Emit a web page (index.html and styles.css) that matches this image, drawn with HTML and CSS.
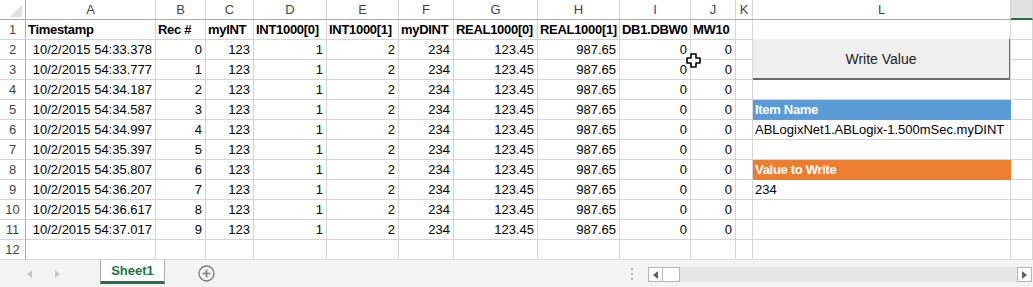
FILE: index.html
```html
<!DOCTYPE html>
<html lang="en">
<head>
    <meta charset="UTF-8">
    <title>Sheet1</title>
    <link rel="stylesheet" href="styles.css">
</head>
<body>
<div class="app">
    <div class="sheet">
        <!-- column headers -->
        <div class="corner"><svg width="26" height="19" viewBox="0 0 26 19"><polygon points="22,5 22,17 10,17" fill="#dfdfdf"/></svg></div>
        <div class="ch">A</div>
        <div class="ch">B</div>
        <div class="ch">C</div>
        <div class="ch">D</div>
        <div class="ch">E</div>
        <div class="ch">F</div>
        <div class="ch">G</div>
        <div class="ch">H</div>
        <div class="ch">I</div>
        <div class="ch">J</div>
        <div class="ch">K</div>
        <div class="ch">L</div>
        <div class="ch ch-sel"></div>

        <!-- row 1 -->
        <div class="rh">1</div>
        <div class="c bold">Timestamp</div>
        <div class="c bold">Rec #</div>
        <div class="c bold">myINT</div>
        <div class="c bold">INT1000[0]</div>
        <div class="c bold">INT1000[1]</div>
        <div class="c bold">myDINT</div>
        <div class="c bold">REAL1000[0]</div>
        <div class="c bold">REAL1000[1]</div>
        <div class="c bold">DB1.DBW0</div>
        <div class="c bold">MW10</div>
        <div class="c"></div>
        <div class="c"></div>
        <div class="c"></div>

        <!-- row 2 -->
        <div class="rh">2</div>
        <div class="c num">10/2/2015 54:33.378</div>
        <div class="c num">0</div>
        <div class="c num">123</div>
        <div class="c num">1</div>
        <div class="c num">2</div>
        <div class="c num">234</div>
        <div class="c num">123.45</div>
        <div class="c num">987.65</div>
        <div class="c num">0</div>
        <div class="c num">0</div>
        <div class="c"></div>
        <div class="c btn-cell"><button class="write-btn">Write Value</button></div>
        <div class="c"></div>

        <!-- row 3 -->
        <div class="rh">3</div>
        <div class="c num">10/2/2015 54:33.777</div>
        <div class="c num">1</div>
        <div class="c num">123</div>
        <div class="c num">1</div>
        <div class="c num">2</div>
        <div class="c num">234</div>
        <div class="c num">123.45</div>
        <div class="c num">987.65</div>
        <div class="c num">0</div>
        <div class="c num">0</div>
        <div class="c"></div>
        <div class="c"></div>

        <!-- row 4 -->
        <div class="rh">4</div>
        <div class="c num">10/2/2015 54:34.187</div>
        <div class="c num">2</div>
        <div class="c num">123</div>
        <div class="c num">1</div>
        <div class="c num">2</div>
        <div class="c num">234</div>
        <div class="c num">123.45</div>
        <div class="c num">987.65</div>
        <div class="c num">0</div>
        <div class="c num">0</div>
        <div class="c"></div>
        <div class="c"></div>
        <div class="c"></div>

        <!-- row 5 -->
        <div class="rh">5</div>
        <div class="c num">10/2/2015 54:34.587</div>
        <div class="c num">3</div>
        <div class="c num">123</div>
        <div class="c num">1</div>
        <div class="c num">2</div>
        <div class="c num">234</div>
        <div class="c num">123.45</div>
        <div class="c num">987.65</div>
        <div class="c num">0</div>
        <div class="c num">0</div>
        <div class="c"></div>
        <div class="c bold fill-blue">Item Name</div>
        <div class="c"></div>

        <!-- row 6 -->
        <div class="rh">6</div>
        <div class="c num">10/2/2015 54:34.997</div>
        <div class="c num">4</div>
        <div class="c num">123</div>
        <div class="c num">1</div>
        <div class="c num">2</div>
        <div class="c num">234</div>
        <div class="c num">123.45</div>
        <div class="c num">987.65</div>
        <div class="c num">0</div>
        <div class="c num">0</div>
        <div class="c"></div>
        <div class="c">ABLogixNet1.ABLogix-1.500mSec.myDINT</div>
        <div class="c"></div>

        <!-- row 7 -->
        <div class="rh">7</div>
        <div class="c num">10/2/2015 54:35.397</div>
        <div class="c num">5</div>
        <div class="c num">123</div>
        <div class="c num">1</div>
        <div class="c num">2</div>
        <div class="c num">234</div>
        <div class="c num">123.45</div>
        <div class="c num">987.65</div>
        <div class="c num">0</div>
        <div class="c num">0</div>
        <div class="c"></div>
        <div class="c"></div>
        <div class="c"></div>

        <!-- row 8 -->
        <div class="rh">8</div>
        <div class="c num">10/2/2015 54:35.807</div>
        <div class="c num">6</div>
        <div class="c num">123</div>
        <div class="c num">1</div>
        <div class="c num">2</div>
        <div class="c num">234</div>
        <div class="c num">123.45</div>
        <div class="c num">987.65</div>
        <div class="c num">0</div>
        <div class="c num">0</div>
        <div class="c"></div>
        <div class="c bold fill-orange">Value to Write</div>
        <div class="c"></div>

        <!-- row 9 -->
        <div class="rh">9</div>
        <div class="c num">10/2/2015 54:36.207</div>
        <div class="c num">7</div>
        <div class="c num">123</div>
        <div class="c num">1</div>
        <div class="c num">2</div>
        <div class="c num">234</div>
        <div class="c num">123.45</div>
        <div class="c num">987.65</div>
        <div class="c num">0</div>
        <div class="c num">0</div>
        <div class="c"></div>
        <div class="c">234</div>
        <div class="c"></div>

        <!-- row 10 -->
        <div class="rh">10</div>
        <div class="c num">10/2/2015 54:36.617</div>
        <div class="c num">8</div>
        <div class="c num">123</div>
        <div class="c num">1</div>
        <div class="c num">2</div>
        <div class="c num">234</div>
        <div class="c num">123.45</div>
        <div class="c num">987.65</div>
        <div class="c num">0</div>
        <div class="c num">0</div>
        <div class="c"></div>
        <div class="c"></div>
        <div class="c"></div>

        <!-- row 11 -->
        <div class="rh">11</div>
        <div class="c num">10/2/2015 54:37.017</div>
        <div class="c num">9</div>
        <div class="c num">123</div>
        <div class="c num">1</div>
        <div class="c num">2</div>
        <div class="c num">234</div>
        <div class="c num">123.45</div>
        <div class="c num">987.65</div>
        <div class="c num">0</div>
        <div class="c num">0</div>
        <div class="c"></div>
        <div class="c"></div>
        <div class="c"></div>

        <!-- row 12 -->
        <div class="rh">12</div>
        <div class="c"></div>
        <div class="c"></div>
        <div class="c"></div>
        <div class="c"></div>
        <div class="c"></div>
        <div class="c"></div>
        <div class="c"></div>
        <div class="c"></div>
        <div class="c"></div>
        <div class="c"></div>
        <div class="c"></div>
        <div class="c"></div>
        <div class="c"></div>
    </div>

    <div class="tabbar">
        <div class="tab-nav">
            <svg width="5" height="8" viewBox="0 0 5 8"><polygon points="5,0 5,8 0,4" fill="#c6c6c6"/></svg>
            <svg width="5" height="8" viewBox="0 0 5 8"><polygon points="0,0 0,8 5,4" fill="#c6c6c6"/></svg>
        </div>
        <div class="sheet-tab">Sheet1</div>
        <div class="add-sheet">
            <svg width="17" height="17" viewBox="0 0 17 17">
                <circle cx="8.5" cy="8.5" r="7.5" fill="none" stroke="#7a7a7a" stroke-width="1.3"/>
                <path d="M8.5 4.5v8M4.5 8.5h8" stroke="#7a7a7a" stroke-width="1.5"/>
            </svg>
        </div>
        <div class="spacer"></div>
        <div class="split-dots">
            <span></span><span></span><span></span>
        </div>
        <div class="hscroll">
            <div class="sbtn">
                <svg width="5" height="8" viewBox="0 0 5 8"><polygon points="5,0 5,8 0,4" fill="#606060"/></svg>
            </div>
            <div class="thumb"></div>
            <div class="track"></div>
            <div class="sbtn">
                <svg width="5" height="8" viewBox="0 0 5 8"><polygon points="0,0 0,8 5,4" fill="#606060"/></svg>
            </div>
        </div>
    </div>

    <!-- mouse cursor over the sheet -->
    <svg class="cursor" width="16" height="16" viewBox="0 0 16 16">
        <polygon points="5,1 10,1 10,5 14,5 14,10 10,10 10,14 5,14 5,10 1,10 1,5 5,5" fill="#fff" stroke="#000" stroke-width="1.6" stroke-linejoin="round"/>
    </svg>
</div>
</body>
</html>
```

FILE: styles.css
```css
body {
    margin: 0;
    font-family: "Liberation Sans", Arial, sans-serif;
    font-size: 13px;
    color: #000;
    background: #fff;
    overflow: hidden;
}
.app {
    position: relative;
    width: 1033px;
    height: 287px;
}
.sheet {
    display: grid;
    grid-template-columns: 26px 130px 50px 48px 73px 72px 55px 84px 82px 71px 45px 17px 258px 22px;
    grid-template-rows: repeat(13, 20px);
}
.sheet > div {
    box-sizing: border-box;
    border-right: 1px solid #d4d4d4;
    border-bottom: 1px solid #d4d4d4;
    line-height: 19px;
    white-space: nowrap;
}
.corner {
    border-right-color: #ababab !important;
    border-bottom-color: #ababab !important;
}
.corner svg {
    display: block;
}
.ch {
    text-align: center;
    color: #444;
    border-bottom-color: #ababab !important;
}
.ch-sel {
    background: #e1e1e1;
    border-bottom: 2px solid #217346 !important;
}
.rh {
    text-align: center;
    color: #444;
    border-right-color: #ababab !important;
}
.c {
    padding: 0 2px;
}
.bold {
    font-weight: bold;
    letter-spacing: -0.3px;
}
.num {
    text-align: right;
    padding-right: 3px;
}
.fill-blue {
    background: #5b9bd5;
    color: #fff;
    border-color: #5b9bd5 !important;
}
.fill-orange {
    background: #ed7d31;
    color: #fff;
    border-color: #ed7d31 !important;
}
.btn-cell {
    grid-row: span 2;
    padding: 0;
    border-bottom: none !important;
}
.write-btn {
    display: block;
    box-sizing: border-box;
    width: 100%;
    height: 41px;
    margin-top: -1px;
    background: #efefef;
    border: none;
    border-right: 1px solid #6b6b6b;
    border-bottom: 2px solid #6b6b6b;
    font-family: "Liberation Sans", Arial, sans-serif;
    font-size: 14px;
    color: #222;
    padding: 0;
}

/* sheet tabs and horizontal scroll */
.tabbar {
    display: flex;
    align-items: stretch;
    height: 27px;
    box-sizing: border-box;
    background: #f3f3f3;
}
.tab-nav {
    width: 100px;
    display: flex;
    align-items: center;
    gap: 23px;
    padding-left: 27px;
    box-sizing: border-box;
}
.sheet-tab {
    width: 65px;
    box-sizing: border-box;
    background: #fff;
    border-left: 1px solid #ababab;
    border-right: 1px solid #ababab;
    border-bottom: 3px solid #217346;
    margin-bottom: 3px;
    color: #217346;
    font-weight: bold;
    text-align: center;
    line-height: 22px;
}
.add-sheet {
    display: flex;
    align-items: center;
    padding-left: 33px;
}
.add-sheet svg {
    display: block;
}
.spacer {
    flex: 1;
}
.split-dots {
    display: flex;
    flex-direction: column;
    justify-content: center;
    gap: 3px;
    width: 2px;
    margin-right: 15px;
}
.split-dots span {
    display: block;
    width: 2px;
    height: 2px;
    background: #b0b0b0;
}
.hscroll {
    display: flex;
    width: 384px;
    height: 15px;
    margin: 7px 1px 0 0;
}
.sbtn {
    width: 15px;
    box-sizing: border-box;
    background: #fff;
    border: 1px solid #b5b5b5;
    display: flex;
    align-items: center;
    justify-content: center;
}
.thumb {
    width: 17px;
    box-sizing: border-box;
    background: #fff;
    border: 1px solid #b5b5b5;
    border-left: none;
}
.track {
    flex: 1;
    background: #e6e6e6;
}
.cursor {
    position: absolute;
    left: 686px;
    top: 53px;
}
```
